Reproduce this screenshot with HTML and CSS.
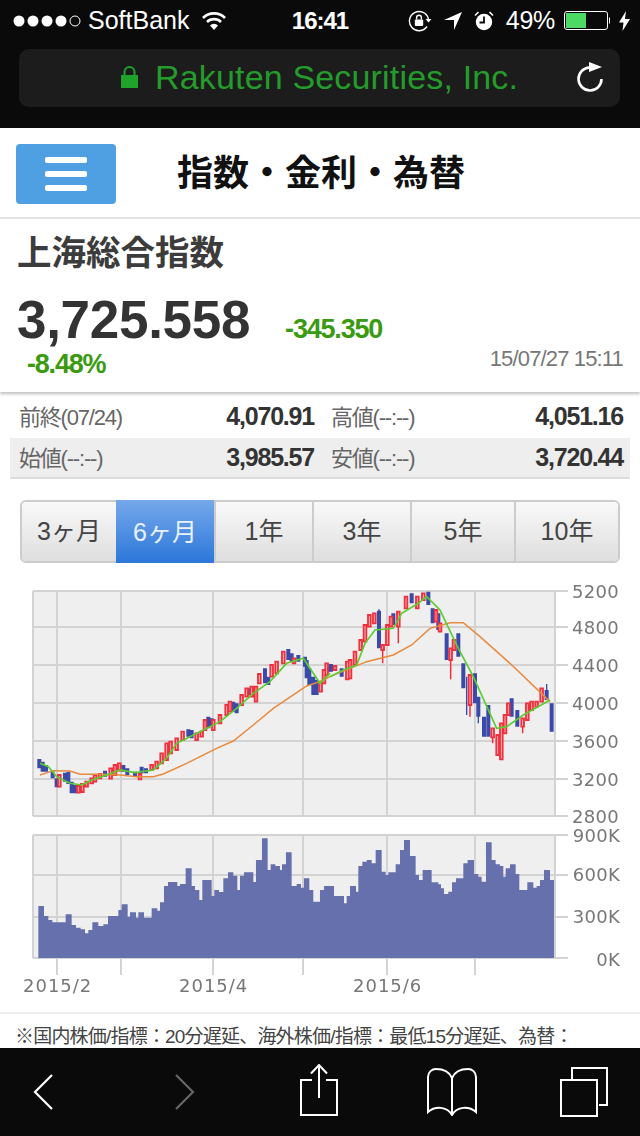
FILE: index.html
```html
<!DOCTYPE html>
<html lang="ja">
<head>
  <meta charset="UTF-8" />
  <meta name="viewport" content="width=device-width, initial-scale=1.0"/>
  <title>指数・金利・為替</title>
  <link rel="stylesheet" href="styles.css">
</head>
<body>

<!-- Browser top -->
<div class="browser-top">
  <div class="status-bar">
    <div class="status-left">
      <svg class="signal" width="68" height="14" viewBox="0 0 68 14">
        <circle cx="6" cy="7" r="5.5" fill="#fff"/>
        <circle cx="20" cy="7" r="5.5" fill="#fff"/>
        <circle cx="34" cy="7" r="5.5" fill="#fff"/>
        <circle cx="48" cy="7" r="5.5" fill="#fff"/>
        <circle cx="62" cy="7" r="5" fill="none" stroke="#fff"/>
      </svg>
      <span class="carrier">SoftBank</span>
      <svg class="wifi" width="24" height="19" viewBox="0 0 24 19">
        <path d="M1 7a15.5 15.5 0 0 1 22 0M5 11a10 10 0 0 1 14 0" fill="none" stroke="#fff" stroke-width="2.6"/>
        <path d="M8 14.4a5.6 5.6 0 0 1 8 0L12 19z" fill="#fff"/>
      </svg>
    </div>
    <div class="clock">16:41</div>
    <div class="status-right">
      <svg width="24" height="22" viewBox="0 0 24 22">
        <path d="M19 16.5A9.6 9.6 0 1 1 20.4 9" fill="none" stroke="#fff" stroke-width="1.4"/>
        <path d="M17.5 9h6l-3 3.6z" fill="#fff"/>
        <rect x="6.8" y="9.5" width="8.4" height="6.5" rx="1" fill="#fff"/>
        <path d="M8.6 9.5V7.6a2.4 2.4 0 0 1 4.8 0v1.9" fill="none" stroke="#fff" stroke-width="1.4"/>
      </svg>
      <svg class="gap-13" width="18" height="18" viewBox="0 0 18 18">
        <path d="M18 0L10 18V8H0z" fill="#fff"/>
      </svg>
      <svg class="gap-13" width="20" height="20" viewBox="0 0 20 20">
        <circle cx="10" cy="11" r="8.2" fill="#fff"/>
        <path d="M10 5.5V11.5H5.5" fill="none" stroke="#0a0a0a" stroke-width="1.8"/>
        <path d="M1 4.5L4.5 1M19 4.5L15.5 1" stroke="#fff" stroke-width="1.5"/>
      </svg>
      <span class="battery-pct">49%</span>
      <svg class="gap-9" width="46" height="20" viewBox="0 0 46 20">
        <rect x="0.5" y="0.5" width="43" height="18" rx="2.5" fill="none" stroke="#fff"/>
        <rect x="2" y="2" width="20" height="15" fill="#4cd964"/>
        <path d="M45 6.5a3 3 0 0 1 0 6z" fill="#fff"/>
      </svg>
      <svg class="gap-9" width="11" height="20" viewBox="0 0 11 20">
        <path d="M7 0L0 11.500H4.500L3.500 20L11 8H6z" fill="#fff"/>
      </svg>
    </div>
  </div>
  <div class="url-bar">
    <svg class="lock" width="17" height="22" viewBox="0 0 17 22">
      <rect y="9" width="17" height="13" fill="#1fa32a"/>
      <path d="M3.500 10V6a5 5 0 0 1 10 0v4" fill="none" stroke="#1fa32a" stroke-width="2"/>
    </svg>
    <span class="url-text">Rakuten Securities, Inc.</span>
    <svg class="reload" width="28" height="31" viewBox="0 0 28 31">
      <path d="M12.500 6.500A11.500 11.500 0 1 0 24.500 18" fill="none" stroke="#fff" stroke-width="2.600"/>
      <path d="M12 1L25 6L12 11z" fill="#fff"/>
    </svg>
  </div>
</div>

<div class="page">

  <header class="site-header">
    <button class="menu-btn"><span></span><span></span><span></span></button>
    <h1>指数・金利・為替</h1>
  </header>

  <section class="quote">
    <h2>上海総合指数</h2>
    <div class="price-row">
      <span class="price">3,725.558</span>
      <span class="change">-345.350</span>
    </div>
    <div class="pct-row">
      <span class="change pct">-8.48%</span>
      <span class="stamp">15/07/27 15:11</span>
    </div>
  </section>

  <div class="stats">
    <div class="stats-row">
      <div class="stat"><span class="stat-label">前終(07/24)</span><b>4,070.91</b></div>
      <div class="stat"><span class="stat-label">高値(--:--)</span><b>4,051.16</b></div>
    </div>
    <div class="stats-row alt">
      <div class="stat"><span class="stat-label">始値(--:--)</span><b>3,985.57</b></div>
      <div class="stat"><span class="stat-label">安値(--:--)</span><b>3,720.44</b></div>
    </div>
  </div>

  <div class="periods">
    <span>3ヶ月</span>
    <span class="active">6ヶ月</span>
    <span>1年</span>
    <span>3年</span>
    <span>5年</span>
    <span>10年</span>
  </div>

  <!-- viewBox keeps page pixel coordinates -->
  <svg class="chart" width="640" height="430" viewBox="0 580 640 430">
    <rect x="33" y="591" width="522" height="225" fill="#efefef"/>
    <rect x="33" y="835" width="522" height="123" fill="#efefef"/>

    <path class="grid" d="M33 591H568M33 627H568M33 665H568M33 703H568M33 741H568M33 779H568M33 816H568
      M33 591V816M57 591V816M121 591V816M213 591V816M303 591V816M387 591V816M475 591V816M555 591V816"/>
    <path class="grid" d="M33 835H568M33 875H568M33 917H568M33 958H568
      M33 835V958M57 835V975M121 835V975M213 835V975M303 835V975M387 835V975M475 835V975M555 835V958"/>

    <!-- volume -->
    <g transform="translate(20 820) scale(.3333)">
      <path class="vol" d="M55 414V258H72V288H85V300H97V307H137V283H155V315H168V323H182V328H195V340H205V330H217V307H235V318H250V313H264V288H295V270H305V253H323V290H330V277H348V293H355V277H372V293H395V265H412V272H420V247H432V198H444V186H472V198H480V192H497V145H515V198H525V210H538V240H547V180H575V228H583V210H597V216H610V175H624V157H640V167H652V210H660V167H672V157H700V186H708V120H726V55H743V150H752V133H766V138H780V150H786V133H798V97H815V198H830V192H843V203H852V175H868V210H880V245H900V210H912V198H931V414Z"/>
    </g>
    <g transform="translate(330 820) scale(.3333)">
      <path class="vol" d="M0 414V198H12V228H42V250H50V228H60V198H78V215H85V138H97V125H110V120H125V130H137V90H155V155H167V165H175V157H197V133H210V90H222V60H240V108H257V165H267V180H278V150H305V187H325V193H333V205H342V222H355V215H366V187H378V175H400V130H413V120H432V162H445V170H455V185H468V67H485V120H497V133H510V138H520V170H527V145H540V133H557V162H568V210H592V187H610V203H620V198H630V180H642V150H660V180H672V414Z"/>
    </g>

    <!-- candles, left half -->
    <g transform="translate(20 580) scale(.3333)">
      <path class="blue" d="M58 537V565M68 545V575M78 555V575M98 575V595M110 595V622M135 578V605M145 575V612M155 605V640M165 615V640M255 572V590M310 555V575M322 565V585M345 575V590M365 560V580M378 565V580M505 448V470M515 450V475M565 410V445M575 415V440M640 365V395M650 370V400M690 325V345M735 265V310M745 290V315M805 207V240M815 220V245M835 225V245M855 230V260M860 240V295M868 265V315M880 290V345M890 300V345M925 255V275"/>
      <path class="red" d="M114 585h8V620h-8ZM171 618h8V638h-8ZM183 612h8V636h-8ZM196 605h8V620h-8ZM211 595h8V610h-8ZM221 585h8V605h-8ZM236 582h8V595h-8ZM268 565h8V596h-8ZM281 555h8V585h-8ZM294 550h8V572h-8ZM356 582h8V598h-8ZM391 555h8V570h-8ZM406 545h8V565h-8ZM421 520h8V550h-8ZM436 490h8V540h-8ZM448 485h8V520h-8ZM466 475h8V510h-8ZM484 455h8V480h-8ZM526 460h8V480h-8ZM541 455h8V470h-8ZM551 420h8V450h-8ZM576 420h8V450h-8ZM596 405h8V430h-8ZM616 375h8V405h-8ZM626 365h8V395h-8ZM661 345h8V375h-8ZM676 325h8V350h-8ZM691 320h8V350h-8ZM704 320h8V365h-8ZM714 282h8V310h-8ZM751 255h8V290h-8ZM766 245h8V280h-8ZM786 215h8V250h-8ZM818 235h8V250h-8ZM898 305h8V335h-8ZM908 270h8V310h-8ZM916 250h8V285h-8Z"/>
      <polyline class="ma-long" points="60,585 100,572 150,573 180,583 240,583 300,585 350,590 400,590 430,582 500,550 590,505 640,483 700,435 760,385 820,345 860,318 900,305 930,290"/>
      <polyline class="ma-short" points="60,550 85,560 110,590 150,610 185,615 215,600 260,585 300,570 345,578 400,570 440,535 470,490 510,470 550,450 600,425 650,385 700,340 750,305 800,250 850,235 880,280 900,310 930,280"/>
    </g>
    <!-- candles, right half -->
    <g transform="translate(330 580) scale(.3333)">
      <path class="blue" d="M3 252V275M35 265V290M147 92V205M190 100V135M245 40V70M295 35V75M308 85V130M325 100V150M350 160V240M385 160V230M400 250V325M435 280V370M445 350V410M462 410V470M475 375V470M545 355V410M562 390V440M650 330V360M665 370V455"/>
      <path class="blue-thin" d="M410 290V405M445 400V430M147 88V100M650 312V330"/>
      <path class="red" d="M11 258h8V270h-8ZM48 245h8V298h-8ZM56 240h8V295h-8ZM71 215h8V255h-8ZM88 180h8V210h-8ZM101 135h8V185h-8ZM114 105h8V140h-8ZM129 100h8V130h-8ZM154 195h8V210h-8ZM168 135h8V195h-8ZM179 110h8V140h-8ZM201 95h8V140h-8ZM224 50h8V85h-8ZM258 50h8V85h-8ZM276 40h8V60h-8ZM314 90h8V125h-8ZM326 130h8V155h-8ZM358 205h8V240h-8ZM368 180h8V210h-8ZM416 285h8V375h-8ZM484 445h8V472h-8ZM499 465h8V525h-8ZM510 430h8V538h-8ZM521 405h8V460h-8ZM531 370h8V405h-8ZM574 415h8V440h-8ZM588 370h8V420h-8ZM601 365h8V390h-8ZM616 365h8V380h-8ZM631 325h8V365h-8Z"/>
      <path class="wick" d="M158 210V250M205 140V190M362 240V298M420 375V410M488 472V490M578 440V460"/>
      <polyline class="ma-long" points="0,290 60,265 110,245 190,225 245,195 300,145 360,128 400,128 450,170 540,250 660,365"/>
      <polyline class="ma-short" points="0,290 40,270 80,255 105,190 135,150 190,145 215,100 265,70 290,50 330,90 385,205 430,290 500,445 530,440 580,405 660,360"/>
    </g>

    <text class="axis" x="619" y="598">5200</text>
    <text class="axis" x="619" y="634">4800</text>
    <text class="axis" x="619" y="672">4400</text>
    <text class="axis" x="619" y="710">4000</text>
    <text class="axis" x="619" y="748">3600</text>
    <text class="axis" x="619" y="786">3200</text>
    <text class="axis" x="619" y="823">2800</text>
    <text class="axis" x="620" y="842">900K</text>
    <text class="axis" x="620" y="881">600K</text>
    <text class="axis" x="620" y="923">300K</text>
    <text class="axis" x="620" y="966">0K</text>
    <text class="axis start" x="23" y="992">2015/2</text>
    <text class="axis start" x="179" y="992">2015/4</text>
    <text class="axis start" x="353" y="992">2015/6</text>
  </svg>

  <p class="note">※国内株価/指標：20分遅延、海外株価/指標：最低15分遅延、為替：</p>
</div>

<!-- Browser bottom -->
<div class="toolbar">
  <svg class="tb-back" width="20" height="36" viewBox="0 0 20 36">
    <path d="M19 1L2 18L19 35" fill="none" stroke="#fff" stroke-width="2.200"/>
  </svg>
  <svg class="tb-fwd" width="20" height="36" viewBox="0 0 20 36">
    <path d="M1 1L18 18L1 35" fill="none" stroke="#666" stroke-width="2.200"/>
  </svg>
  <svg class="tb-share" width="38" height="52" viewBox="0 0 38 52">
    <path d="M12 16H1V51H37V16H26M19 34V1M11 9.500L19 1L27 9.500" fill="none" stroke="#fff" stroke-width="2"/>
  </svg>
  <svg class="tb-book" width="50" height="48" viewBox="0 0 50 48">
    <path d="M25 10C22 3 15 1 9 1C5 1 1 4 1 9V44C8 38 20 38 25 47C30 38 42 38 49 44V9C49 4 45 1 41 1C35 1 28 3 25 10V47" fill="none" stroke="#fff" stroke-width="2"/>
  </svg>
  <svg class="tb-tabs" width="48" height="50" viewBox="0 0 48 50">
    <path d="M12 12V1H47V38H39" fill="none" stroke="#fff" stroke-width="2"/>
    <rect x="1" y="13" width="36" height="36" fill="none" stroke="#fff" stroke-width="2"/>
  </svg>
</div>

</body>
</html>
```
FILE: styles.css
```css
* {
  box-sizing: border-box;
}

body {
  margin: 0;
  width: 640px;
  height: 1136px;
  overflow: hidden;
  display: flex;
  flex-direction: column;
  background: #fff;
  font-family: "Liberation Sans", "Noto Sans CJK JP", sans-serif;
  color: #333;
}

/* browser chrome */
.browser-top {
  flex: none;
  height: 128px;
  background: #0a0a0a;
  color: #fff;
}

.status-bar {
  height: 41px;
  display: grid;
  grid-template-columns: 1fr auto 1fr;
  align-items: center;
  font-size: 24px;
}

.status-left {
  display: flex;
  align-items: center;
  padding-left: 13px;
}

.carrier {
  margin-left: 7px;
  font-size: 25px;
}

.wifi {
  margin-left: 13px;
}

.clock {
  font-weight: bold;
  font-size: 24px;
  letter-spacing: -1px;
}

.status-right {
  display: flex;
  align-items: center;
  justify-content: flex-end;
  padding-right: 10px;
}

.gap-13 {
  margin-left: 12px;
}

.gap-9 {
  margin-left: 9px;
}

.battery-pct {
  margin-left: 12px;
  font-size: 25px;
  letter-spacing: -.3px;
}

.url-bar {
  position: relative;
  height: 58px;
  margin: 8px 20px 0 19px;
  display: flex;
  align-items: center;
  padding: 0 0 2px 102px;
  background: #1c1c1c;
  border-radius: 10px;
}

.url-text {
  margin-left: 17px;
  font-size: 34px;
  letter-spacing: .17px;
  color: #249c2b;
}

.reload {
  position: absolute;
  right: 15px;
  top: 12px;
}

.toolbar {
  flex: none;
  height: 88px;
  display: flex;
  align-items: center;
  padding-left: 33px;
  background: #0a0a0a;
}

.tb-fwd {
  margin-left: 122px;
}

.tb-share {
  margin-left: 105px;
  margin-top: -4px;
}

.tb-book {
  margin-left: 89px;
}

.tb-tabs {
  margin-left: 83px;
}

/* page */
.page {
  flex: 1;
  min-height: 0;
  overflow: hidden;
}

.site-header {
  height: 91px;
  display: flex;
  align-items: center;
  padding: 2px 0 0 16px;
  border-bottom: 2px solid #e4e4e4;
}

.menu-btn {
  width: 100px;
  height: 60px;
  display: flex;
  flex-direction: column;
  justify-content: center;
  align-items: center;
  gap: 8px;
  padding: 0;
  background: #4f9fe3;
  border: none;
  border-radius: 4px;
}

.menu-btn span {
  width: 42px;
  height: 6px;
  background: #fff;
  border-radius: 2px;
}

.site-header h1 {
  margin: 0 0 0 61px;
  font-size: 36px;
  line-height: 1;
  color: #111;
}

.quote {
  height: 173px;
  padding: 13px 17px 0 17px;
  box-shadow: 0 2px 3px rgba(0, 0, 0, .25);
}

.quote h2 {
  margin: 0;
  font-size: 34.500px;
  line-height: 42px;
  font-weight: bold;
  color: #3c3c3c;
}

.price-row {
  display: flex;
  align-items: baseline;
  margin-top: 18px;
  line-height: 56px;
}

.price {
  font-size: 53px;
  font-weight: bold;
  letter-spacing: -.3px;
}

.change {
  margin-left: 35px;
  font-size: 27px;
  font-weight: bold;
  letter-spacing: -1.200px;
  color: #3a9a10;
}

.pct-row {
  display: flex;
  justify-content: space-between;
  line-height: 30px;
  margin-top: -8px;
}

.pct {
  margin-left: 10px;
}

.stamp {
  margin-top: -5px;
  font-size: 22px;
  letter-spacing: -.85px;
  color: #777;
}

.stats {
  margin: 0 10px;
}

.stats-row {
  height: 46px;
  display: grid;
  grid-template-columns: 295px 292px;
  gap: 17px;
  padding: 3px 0 0 9px;
  align-items: center;
}

.stats-row.alt {
  height: 41px;
  padding-top: 0;
  padding-bottom: 1px;
  background: #eee;
  border-bottom: 2px solid #ddd;
}

.stat {
  display: flex;
  justify-content: space-between;
  align-items: center;
}

.stat-label {
  margin-top: -3px;
  font-size: 22px;
  letter-spacing: -1.200px;
  color: #666;
}

.stat b {
  font-size: 25px;
  letter-spacing: -1.200px;
  color: #333;
}

.periods {
  display: grid;
  grid-template-columns: 94px 98px 98px 98px 104px 1fr;
  height: 63px;
  margin: 21px 20px 0;
  border: 2px solid #ccc;
  border-radius: 6px;
}

.periods span {
  display: flex;
  align-items: center;
  justify-content: center;
  padding-bottom: 5px;
  font-size: 25px;
  color: #444;
  background: linear-gradient(#f9f9f9, #dedede);
  border-left: 2px solid #ccc;
}

.periods span:first-child {
  border-left: none;
  border-radius: 4px 0 0 4px;
}

.periods span:last-child {
  border-radius: 0 4px 4px 0;
}

.periods .active {
  margin: -2px 0;
  padding-bottom: 3px;
  color: #e8f1fc;
  background: linear-gradient(#76a8ea, #2b77da);
  border-left: none;
}

/* chart */
.chart {
  display: block;
  margin-top: 17px;
  filter: blur(.4px);
}

.grid {
  fill: none;
  stroke: #d3d3d3;
  stroke-width: 2;
}

.vol {
  fill: #6670ad;
}

.blue {
  fill: none;
  stroke: #3b4aa8;
  stroke-width: 12;
}

.blue-thin {
  fill: none;
  stroke: #3b4aa8;
  stroke-width: 4;
}

.red {
  fill: #f8c4c6;
  stroke: #f0303c;
  stroke-width: 5.500;
}

.wick {
  fill: none;
  stroke: #f0303c;
  stroke-width: 4.500;
}

.ma-short {
  fill: none;
  stroke: #5ccc30;
  stroke-width: 5;
}

.ma-long {
  fill: none;
  stroke: #e88a3e;
  stroke-width: 4.500;
}

.axis {
  font-family: "DejaVu Sans", sans-serif;
  font-size: 18px;
  letter-spacing: .3px;
  fill: #777;
  text-anchor: end;
}

.axis.start {
  text-anchor: start;
  letter-spacing: 1px;
}

.note {
  margin: 2px 0 0;
  padding: 14px 15px 0;
  border-top: 2px solid #eee;
  font-size: 19px;
  line-height: 18px;
  letter-spacing: -.8px;
  color: #444;
}
```
